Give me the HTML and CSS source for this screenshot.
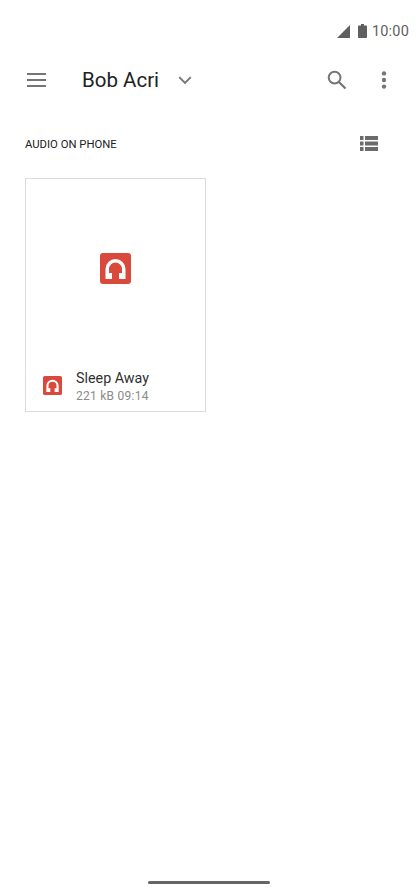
FILE: index.html
```html
<!DOCTYPE html>
<html lang="en">
<head>
<meta charset="utf-8">
<title>Bob Acri</title>
<link rel="stylesheet" href="styles.css">
</head>
<body>
<div class="screen">
  <div class="status">
    <svg class="sig" width="14" height="14" viewBox="0 0 14 14"><path d="M14 1V14H1Z" fill="#5f5f5f"/></svg>
    <svg class="bat" width="9" height="14" viewBox="0 0 9 14"><path d="M3 0H6V1.5H8.2A.8.8 0 0 1 9 2.3V13.2A.8.8 0 0 1 8.2 14H.8A.8.8 0 0 1 0 13.2V2.3A.8.8 0 0 1 .8 1.5H3Z" fill="#5f5f5f"/></svg>
    <span class="time">10:00</span>
  </div>
  <header class="toolbar">
    <svg class="menu" width="20" height="14" viewBox="0 0 20 14"><path d="M0 1H19M0 7H19M0 13H19" stroke="#757575" stroke-width="2"/></svg>
    <h1 class="title">Bob Acri</h1>
    <svg class="chev" width="14" height="9" viewBox="0 0 14 9"><path d="M1.2 1.2L7 7L12.8 1.2" fill="none" stroke="#757575" stroke-width="1.9"/></svg>
    <div class="spacer"></div>
    <svg class="search" width="20" height="20" viewBox="0 0 20 20"><circle cx="7.6" cy="7.6" r="5.9" fill="none" stroke="#757575" stroke-width="2"/><path d="M12 12L18.5 18.5" stroke="#757575" stroke-width="2.2"/></svg>
    <svg class="more" width="6" height="18" viewBox="0 0 6 18"><circle cx="3" cy="2.4" r="2.2" fill="#757575"/><circle cx="3" cy="9" r="2.2" fill="#757575"/><circle cx="3" cy="15.6" r="2.2" fill="#757575"/></svg>
  </header>
  <div class="section">
    <span class="label">AUDIO ON PHONE</span>
    <svg class="list" width="18" height="15" viewBox="0 0 18 15"><path d="M0 0H3.5V4H0ZM5 0H18V4H5ZM0 5.5H3.5V9.5H0ZM5 5.5H18V9.5H5ZM0 11H3.5V15H0ZM5 11H18V15H5Z" fill="#6b6b6b"/></svg>
  </div>
  <article class="card">
    <div class="preview">
      <svg width="31" height="31" viewBox="0 0 31 31"><rect width="31" height="31" rx="3" fill="#d94a3d"/><path d="M5.500 26V16A10 10 0 0 1 25.500 16V26H19V20H22V16A6.500 6.500 0 0 0 9 16V20H12V26Z" fill="#fff"/></svg>
    </div>
    <div class="meta">
      <svg width="19" height="19" viewBox="0 0 31 31"><rect width="31" height="31" rx="3" fill="#d94a3d"/><path d="M5.500 26V16A10 10 0 0 1 25.500 16V26H19V20H22V16A6.500 6.500 0 0 0 9 16V20H12V26Z" fill="#fff"/></svg>
      <div class="text">
        <div class="name">Sleep Away</div>
        <div class="info">221 kB 09:14</div>
      </div>
    </div>
  </article>
  <div class="fill"></div>
  <div class="home"></div>
</div>
</body>
</html>
```
FILE: styles.css
```css
* { box-sizing: border-box; }
html, body { margin: 0; padding: 0; background: #fff; }
body { font-family: Roboto, "Liberation Sans", sans-serif; }
.screen { width: 419px; height: 894px; display: flex; flex-direction: column; overflow: hidden; }
.status { height: 24px; margin-top: 19px; padding-right: 10px; display: flex; align-items: center; justify-content: flex-end; color: #5f5f5f; font-size: 14.5px; letter-spacing: .2px; }
.sig { margin-right: 8px; }
.bat { margin-right: 5px; }
.toolbar { height: 38px; margin-top: 18px; padding: 0 32px 0 27px; display: flex; align-items: center; }
.title { margin: 0 0 0 35px; font-size: 20.5px; font-weight: 400; color: #212121; }
.chev { margin-left: 19px; }
.spacer { flex: 1; }
.search { margin-right: 34px; }
.section { margin-top: 32px; height: 24px; padding: 0 41px 0 25px; display: flex; align-items: center; justify-content: space-between; }
.label { font-size: 11.3px; color: #212121; margin-top: 2px; }
.card { margin: 23px 0 0 25px; width: 181px; height: 234px; border: 1px solid #dcdcdc; display: flex; flex-direction: column; }
.preview { height: 179px; display: flex; align-items: center; justify-content: center; }
.meta { flex: 1; display: flex; align-items: center; gap: 14px; padding: 2px 0 0 17px; }
.text { padding-top: 2px; }
.name { font-size: 14.3px; color: #303030; line-height: 19px; }
.info { font-size: 12px; color: #8a8a8a; line-height: 17px; letter-spacing: .25px; }
.fill { flex: 1; }
.home { width: 122px; height: 3px; margin: 0 0 10px 148px; background: #666; border-radius: 2px; }
```
